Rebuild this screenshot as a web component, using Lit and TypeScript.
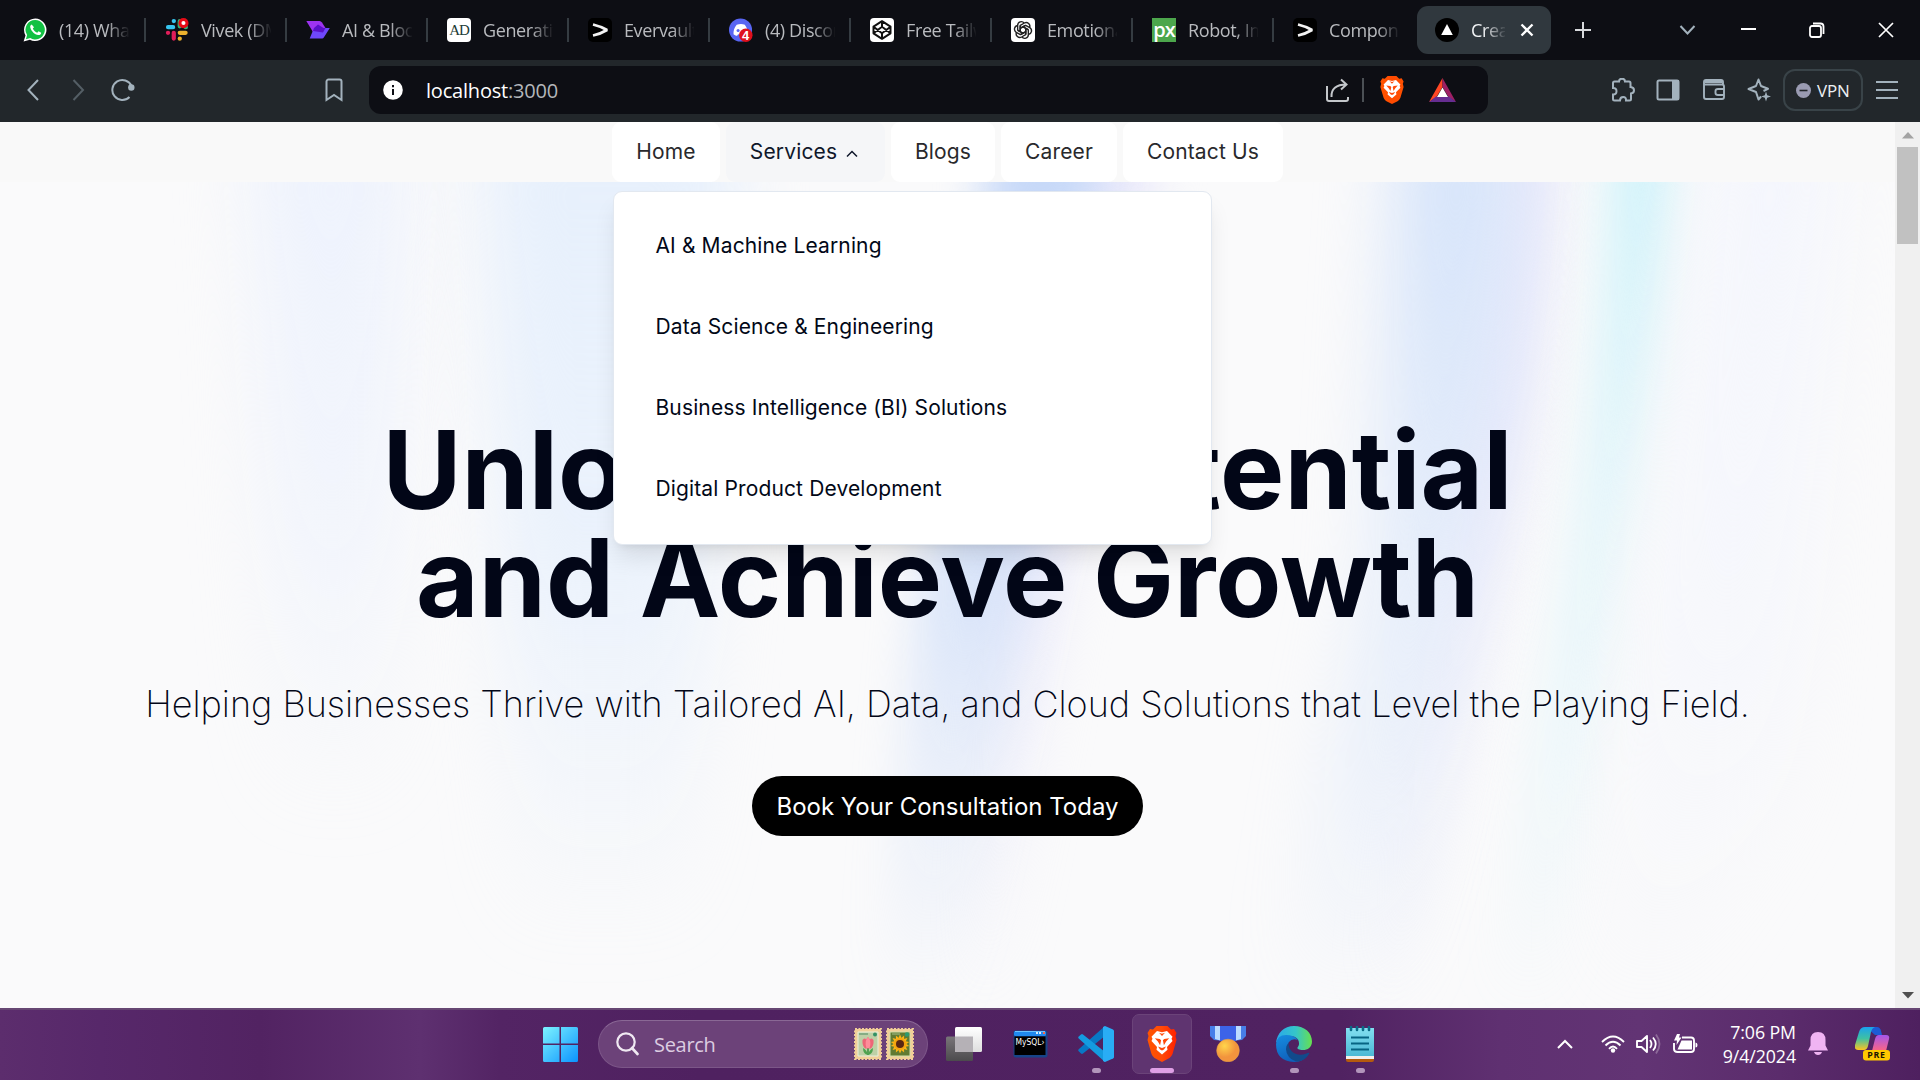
import { LitElement, html, svg, css } from "lit";
import { customElement } from "lit/decorators.js";

const stampEdge = "M1 1h26v30H1z";

const icons = {
  whatsapp: html`<svg width="24" height="24" viewBox="0 0 24 24"><path d="M12.300 .5A11.300 11.300 0 0 0 2.500 17.400L.6 23.500l6.300-1.700A11.300 11.300 0 1 0 12.300.5z" fill="#fff"/><path d="M12.300 2a9.700 9.700 0 0 0-8.200 15l-1.200 4.200 4.400-1.100A9.700 9.700 0 1 0 12.300 2z" fill="#12c143"/><path d="M8.700 6.500c-.9.300-1.800 1.500-1.400 3.100.9 3.700 4.200 7 8 7.500 1.600.1 2.800-.8 2.900-2.300l-2.600-1.600-1.400 1.500c-2-.7-3.700-2.200-4.400-4.100l1.200-1.400z" fill="#fff"/></svg>`,
  slack: html`<svg width="26" height="26" viewBox="0 0 26 26"><g stroke-width="4.600" stroke-linecap="round"><path d="M3.300 10h5.500M9.500 3.300h.1" stroke="#36c5f0"/><path d="M16 3.500V9M22.500 10h.1" stroke="#2eb67d"/><path d="M16 16h6.300M16 22.300v.1" stroke="#ecb22e"/><path d="M9.500 16v6.300M3.200 16h.1" stroke="#e01e5a"/></g><circle cx="20" cy="5.500" r="5.500" fill="#e60b16"/><circle cx="20" cy="5.500" r="2.200" fill="#fff"/></svg>`,
  arrow: html`<svg width="24" height="24" viewBox="0 0 24 24"><path d="M.3 3h13.200q1.500 0 2.500 1.500L19.500 10 17 14H7z" fill="#9d33f0"/><path d="M8 10L3.700 20.500h12.500q1 0 1.600-1L23.800 10z" fill="#6f48fb"/><path d="M8 10l4-3.500L17.500 10h2l-2.500 4.500L7 13z" fill="#5a10c8"/></svg>`,
  ad: html`<span class="fav ad">AD</span>`,
  evervault: html`<svg width="24" height="24" viewBox="0 0 24 24"><rect width="24" height="24" rx="5" fill="#000"/><path d="M5 6.500c5 1.200 9.500 2.800 14 5.500-4.500 2.700-9 4.400-14 5.500" fill="none" stroke="#f2f2f2" stroke-width="2.800" stroke-linejoin="bevel"/></svg>`,
  discord: html`<svg width="25" height="25" viewBox="0 0 25 25"><circle cx="12" cy="12" r="12" fill="#5865f2"/><path d="M8 6.500c3-1 6-1 8.500 0 2.500 3.500 3.300 6.500 3 10-2 1.500-3 1.500-3.500 1.500l-1-1.500c-2 .5-4 .5-5.500 0L8.500 18c-1.500 0-3-1-3.800-1.600C4.500 13 5.500 9.500 8 6.500z" fill="#fff"/><circle cx="9.500" cy="12.500" r="1.600" fill="#5865f2"/><circle cx="17.500" cy="17.500" r="7" fill="#e0101c"/><text x="17.400" y="22.300" text-anchor="middle" font-family="Liberation Sans" font-size="13.500" font-weight="700" fill="#fff">4</text></svg>`,
  codepen: html`<svg width="24" height="24" viewBox="0 0 24 24"><rect width="24" height="24" rx="4" fill="#fff"/><path d="M12 3.200l8.500 5.500v6.600L12 20.800l-8.500-5.500V8.700zM12 3.200v5.600M12 15.200v5.600M3.500 8.700L12 15.200l8.500-6.500M3.500 15.300L12 8.800l8.500 6.500" fill="none" stroke="#111" stroke-width="2" stroke-linejoin="round"/></svg>`,
  openai: html`<svg width="24" height="24" viewBox="0 0 24 24"><rect width="24" height="24" rx="4" fill="#fff"/><g fill="none" stroke="#222" stroke-width="1.400" stroke-linejoin="round">${[0, 60, 120, 180, 240, 300].map((a) => svg`<path transform="rotate(${a} 12 12)" d="M9.300 14V7.400l4.100-2.400a3.700 3.700 0 0 1 5.200 4.600M9.300 10.200l5.100-2.900"/>`)}</g></svg>`,
  px: html`<span class="fav px">px</span>`,
  vercel: html`<svg width="24" height="24" viewBox="0 0 24 24"><circle cx="12" cy="12" r="12" fill="#000"/><path d="M12 6l5.800 11H6.200z" fill="#fff"/></svg>`,
};

const lion = (w: number, h: number, id: string) => html`<svg width="${w}" height="${h}" viewBox="0 0 30 36" preserveAspectRatio="none"><defs><linearGradient id="${id}"><stop offset="0" stop-color="#ff5500"/><stop offset=".5" stop-color="${id === "tb" ? "#ff4a00" : "#ff4a08"}"/><stop offset="1" stop-color="${id === "tb" ? "#ff5000" : "#ff2000"}"/></linearGradient></defs><path d="M9.500 0h11l3.500 3.500 3-.5 2.500 4-1 3 1 4-4 14q-1 2.500-3 4L15 36l-7.500-4q-2-1.500-3-4l-4-14 1-4-1-3L3 3l3 .5z" fill="url(#${id})"/><path d="M15 6.300l5-1.300 5.500 5.800-1 2 1 2.200-5.500 6 .5 2.800L15 28.500l-5.500-4.700.5-2.800-5.500-6 1-2.200-1-2L10 5z" fill="#fff"/><path d="M7.800 12.200l5 .8 1.300 1.200-1 5-2.200-3.600zM22.200 12.200l-5 .8-1.300 1.200 1 5 2.200-3.600zM11 20.500l4 1.500 4-1.500-2 3-2 1-2-1zM12 6.800l3 1 3-1-3 3.300z" fill="#ff4a0a"/></svg>`;

const tabs = [
  { icon: icons.whatsapp, label: "(14) WhatsApp" },
  { icon: icons.slack, label: "Vivek (DM)" },
  { icon: icons.arrow, label: "AI & Blockchain" },
  { icon: icons.ad, label: "Generative" },
  { icon: icons.evervault, label: "Evervault C" },
  { icon: icons.discord, label: "(4) Discord" },
  { icon: icons.codepen, label: "Free Tailwind" },
  { icon: icons.openai, label: "Emotional" },
  { icon: icons.px, label: "Robot, Img" },
  { icon: icons.evervault, label: "Components" },
];

@customElement("browser-tabs")
class BrowserTabs extends LitElement {
  static styles = css`
    :host { display: flex; height: 60px; background: #0d0e14; align-items: center; font: 18px "Open Sans", sans-serif; color: #b9bbbf; overflow: hidden; }
    .tab { width: 141px; height: 24px; box-sizing: border-box; display: flex; align-items: center; padding-left: 19px; border-right: 2px solid #353c42; flex: none; margin-right: 0; }
    .tab:first-child { width: 146px; padding-left: 23px; }
    .tab.last { border-color: transparent; }
    .ico { width: 24px; height: 26px; display: flex; align-items: center; flex: none; }
    .label { margin-left: 12px; width: 70px; overflow: hidden; white-space: nowrap; line-height: 26px; letter-spacing: -0.38px; -webkit-mask-image: linear-gradient(90deg, #000 48px, transparent 71px); mask-image: linear-gradient(90deg, #000 48px, transparent 71px); }
    .fav { width: 24px; height: 24px; display: grid; place-items: center; }
    .ad { background: #fff; border-radius: 4px; color: #223c35; font: 15px "Liberation Serif", serif; letter-spacing: -1px; }
    .px { background: #4ca64c; color: #fff; font: 600 20px/20px "Open Sans", sans-serif; letter-spacing: -1px; height: 24px; }
    .active { width: 134px; height: 48px; border-radius: 11px; background: #30383e; display: flex; align-items: center; box-sizing: border-box; padding-left: 18px; color: #f2f4f6; flex: none; margin-left: 2px; }
    .active .label { width: 34px; -webkit-mask-image: linear-gradient(90deg, #000 12px, transparent 36px); mask-image: linear-gradient(90deg, #000 12px, transparent 36px); }
    .x { margin-left: 15px; }
    .controls { display: flex; align-items: center; }
    .plus { margin-left: 23px; }
    .down { margin-left: 87px; }
    .min { margin-left: 45px; }
    .restore { margin-left: 53px; }
    .close { margin-left: 53px; }
    svg { display: block; }
  `;
  render() {
    return html`
      ${tabs.map((t, i) => html`<div class="tab ${i === 9 ? "last" : ""}"><span class="ico">${t.icon}</span><span class="label">${t.label}</span></div>`)}
      <div class="active"><span class="ico">${icons.vercel}</span><span class="label">Create</span>
        <svg class="x" width="14" height="14" viewBox="0 0 14 14"><path d="M1.500 1.500l11 11M12.500 1.500l-11 11" stroke="#fff" stroke-width="2.300"/></svg></div>
      <div class="controls">
        <svg class="plus" width="18" height="18" viewBox="0 0 18 18"><path d="M9 1v16M1 9h16" stroke="#d8dadd" stroke-width="2"/></svg>
        <svg class="down" width="17" height="12" viewBox="0 0 17 12"><path d="M1.500 2l7 7.500 7-7.500" stroke="#a3b2bd" stroke-width="2" fill="none"/></svg>
        <svg class="min" width="15" height="4" viewBox="0 0 15 4"><path d="M0 1h15" stroke="#fff" stroke-width="2"/></svg>
        <svg class="restore" width="16" height="16" viewBox="0 0 16 16"><rect x="1" y="4" width="11" height="11" rx="2" fill="none" stroke="#fff" stroke-width="1.800"/><path d="M4 1.500h7.500a3 3 0 0 1 3 3V12" fill="none" stroke="#fff" stroke-width="1.800"/></svg>
        <svg class="close" width="16" height="16" viewBox="0 0 16 16"><path d="M1 1l14 14M15 1L1 15" stroke="#fff" stroke-width="1.700"/></svg>
      </div>`;
  }
}

@customElement("browser-toolbar")
class BrowserToolbar extends LitElement {
  static styles = css`
    :host { display: flex; height: 62px; background: #22272b; align-items: center; font-family: "Open Sans", sans-serif; box-sizing: border-box; padding-bottom: 2px; }
    svg { display: block; flex: none; }
    .back { margin-left: 26px; } .fwd { margin-left: 32px; } .reload { margin-left: 25px; } .bm { margin-left: 190px; }
    .url { margin-left: 25px; width: 1119px; height: 48px; border-radius: 12px; background: #0d0e14; display: flex; align-items: center; box-sizing: border-box; padding-left: 14px; color: #fff; font-size: 20px; flex: none; }
    .addr { margin-left: 23px; letter-spacing: -0.2px; width: 899px; flex: none; }
    .port { color: #b4b7bb; }
    .div { width: 2px; height: 24px; background: #4b5055; margin: 0 16px 0 12px; flex: none; }
    .bat { margin-left: 25px; }
    .tools { display: flex; align-items: center; gap: 21.300px; margin-left: 123px; }
    .vpn { margin-left: 12px; width: 80px; height: 42px; box-sizing: border-box; border: 2px solid #394348; border-radius: 12px; display: flex; align-items: center; justify-content: center; gap: 6px; font-size: 17px; color: #edf0f3; letter-spacing: -0.2px; flex: none; }
    .menu { margin-left: 13px; }
  `;
  render() {
    const c = "#a3b2bd";
    return html`
      <svg class="back" width="14" height="26" viewBox="0 0 14 26"><path d="M12 3L2.500 13 12 23" fill="none" stroke="${c}" stroke-width="2"/></svg>
      <svg class="fwd" width="14" height="26" viewBox="0 0 14 26"><path d="M1.500 3L11 13 1.500 23" fill="none" stroke="#545e65" stroke-width="2"/></svg>
      <svg class="reload" width="24" height="24" viewBox="0 0 24 24"><path d="M18.500 19A10 10 0 1 1 20.500 8" fill="none" stroke="${c}" stroke-width="2"/><circle cx="20.300" cy="9.500" r="3.200" fill="${c}"/></svg>
      <svg class="bm" width="19" height="24" viewBox="0 0 19 24"><path d="M1.500 22V3.500a2 2 0 0 1 2-2h11a2 2 0 0 1 2 2V22L9 17z" fill="none" stroke="${c}" stroke-width="2"/></svg>
      <div class="url">
        <svg width="20" height="20" viewBox="0 0 20 20"><circle cx="10" cy="10" r="9.800" fill="#fff"/><path d="M10 5v2.200M10 9v6" stroke="#0d0e14" stroke-width="2"/></svg>
        <span class="addr">localhost<span class="port">:3000</span></span>
        <svg class="share" width="25" height="25" viewBox="0 0 25 25"><path d="M2 8v13q0 2 2 2h17q2 0 2-2v-2M6.500 19C6 11 11 6.500 21.500 6.500M16 1.500l5.500 5-5.500 5" fill="none" stroke="#c4c7cb" stroke-width="2"/></svg>
        <span class="div"></span>
        ${lion(24, 28, "tb")}
        <svg class="bat" width="27" height="24" viewBox="0 0 27 24"><path d="M13.500 0L0 24l7.500-5 6-10z" fill="#ff4724"/><path d="M13.500 0L27 24l-7.500-5-6-10z" fill="#9e1f63"/><path d="M0 24h27l-7-5.500H7z" fill="#662d91"/><path d="M13.500 9.500L8 19h11z" fill="#fff"/></svg>
      </div>
      <div class="tools">
        <svg width="24" height="24" viewBox="0 0 24 24"><path d="M2 5q0-1.500 1.500-1.500h4.500q0-2.800 3-2.800t3 2.800h4q1.500 0 1.500 1.500v4q3.500.3 3.500 3.200t-3 3.300v5.500q0 1.500-1.500 1.500h-3.500q.3-3.500-2.800-3.500T9 22.500H3.500Q2 22.500 2 21v-4.500q3.500.2 3.500-3.200T2 10z" fill="none" stroke="${c}" stroke-width="2"/></svg>
        <svg width="24" height="24" viewBox="0 0 24 24"><rect x="1.500" y="2.500" width="21" height="19" rx="1.500" fill="none" stroke="${c}" stroke-width="2"/><path d="M16 2h7v20h-7z" fill="${c}"/></svg>
        <svg width="24" height="24" viewBox="0 0 24 24"><path d="M21 7V4q0-2-2-2H4Q2 2 2 4v15q0 2 2 2h16q2 0 2-2v-2M2 6.500h18q2 0 2 2V17h-6q-2.500 0-2.500-2v-2q0-2 2.500-2h6M3 4h17" fill="none" stroke="${c}" stroke-width="1.900"/></svg>
        <svg width="24" height="24" viewBox="0 0 24 24"><path d="M14 18.500l-2.500 3-2.500-7.500-7.500-3 7.500-3 2.500-6.500L14 8l7 2.800-4.500 2.200" fill="none" stroke="${c}" stroke-width="2" stroke-linejoin="round"/><path d="M19 13.500l1.200 3.800 3.800 1.200-3.800 1.200L19 23.500l-1.200-3.800-3.800-1.200 3.800-1.200z" fill="${c}"/></svg>
      </div>
      <div class="vpn"><svg width="15" height="15" viewBox="0 0 15 15"><circle cx="7.500" cy="7.500" r="7.500" fill="#9a9bb2"/><path d="M3.500 7.500h8" stroke="#22272b" stroke-width="1.600"/></svg>VPN</div>
      <svg class="menu" width="22" height="20" viewBox="0 0 22 20"><path d="M0 2h22M0 10h22M0 18h22" stroke="${c}" stroke-width="2"/></svg>`;
  }
}

@customElement("site-page")
class SitePage extends LitElement {
  static styles = css`
    :host { display: flex; height: 886px; font-family: Inter, sans-serif; background: #fafafb; position: relative; overflow: hidden; }
    .page { width: 1895px; position: relative; }
    .nav { height: 60px; background: #f9f9f9; display: flex; gap: 6px; padding-left: 612px; position: relative; color: #29292c; font-size: 21px; }
    .item { height: 60px; border-radius: 9px; background: #fff; display: flex; align-items: center; justify-content: center; letter-spacing: .15px; box-sizing: border-box; padding-bottom: 1.500px; }
    .item.home { width: 108px; } .item.services { width: 159px; background: #f5f6f8; color: #0f172a; gap: 9px; padding-right: 3px; }
    .item.blogs { width: 104px; } .item.career { width: 116px; } .item.contact { width: 160px; }
    .item.services svg { margin-top: 5px; }
    .drop { position: absolute; left: 612.500px; top: 69px; width: 599px; height: 354px; box-sizing: border-box; border: 1.500px solid #e2e8f0; border-radius: 9px; background: #fff; box-shadow: 0 15px 23px -4px rgba(0,0,0,.1), 0 6px 9px -6px rgba(0,0,0,.1); padding: 12.500px 42px; color: #020817; font-size: 21px; z-index: 2; letter-spacing: .13px; }
    .drop div { height: 81px; display: flex; align-items: center; }
    .drop span { white-space: nowrap; }
    .hero { height: 826px; position: relative; box-sizing: border-box; padding-top: 234px; display: flex; flex-direction: column; align-items: center; }
    .beams { position: absolute; left: 0; top: 0; }
    h1 { margin: 0; font-size: 108px; line-height: 108px; font-weight: 700; color: #020617; text-align: center; position: relative; white-space: nowrap; }
    p { margin: 42px 0 0; font-size: 36px; line-height: 60px; font-weight: 200; color: #020617; position: relative; white-space: nowrap; }
    .cta { margin-top: 42px; width: 391px; height: 60px; border-radius: 30px; background: #000; color: #fff; font-size: 24px; display: grid; place-items: center; position: relative; }
    .bar { width: 25px; background: #f0f0f0; display: flex; flex-direction: column; align-items: center; box-sizing: border-box; padding: 10px 0 9px; }
    .thumb { width: 21px; height: 97px; background: #c1c1c1; margin-top: 8px; margin-bottom: auto; }
  `;
  render() {
    const beam = (id: string, color: string, stops: number[][]) => svg`<linearGradient id="${id}" x1="0" y1="0" x2="0" y2="826" gradientUnits="userSpaceOnUse">${stops.map(([o, a]) => svg`<stop offset="${o}" stop-color="${color}" stop-opacity="${a}"/>`)}</linearGradient>`;
    return html`
      <div class="page">
        <nav class="nav">
          <div class="item home">Home</div>
          <div class="item services">Services<svg width="12" height="9" viewBox="0 0 12 9"><path d="M1 7.500l5-5 5 5" fill="none" stroke="#0f172a" stroke-width="1.500"/></svg></div>
          <div class="item blogs">Blogs</div>
          <div class="item career">Career</div>
          <div class="item contact">Contact Us</div>
          <div class="drop">
            <div><span>AI &amp; Machine Learning</span></div>
            <div><span>Data Science &amp; Engineering</span></div>
            <div><span>Business Intelligence (BI) Solutions</span></div>
            <div><span>Digital Product Development</span></div>
          </div>
        </nav>
        <section class="hero">
          <svg class="beams" width="1895" height="826" viewBox="0 0 1895 826">
            <defs>
              <filter id="b1" x="-50%" y="-20%" width="200%" height="140%" color-interpolation-filters="sRGB"><feGaussianBlur stdDeviation="22 30"/></filter>
              <filter id="b2" x="-50%" y="-20%" width="200%" height="140%" color-interpolation-filters="sRGB"><feGaussianBlur stdDeviation="34 40"/></filter>
              ${beam("g1", "#edf2fd", [[0, 0.9], [0.4, 0.6], [0.75, 0]])}
              ${beam("g2", "#e7f0fc", [[0, 1], [0.45, 0.8], [0.9, 0]])}
              ${beam("g3", "#c6d8f8", [[0, 1], [0.1, 0.85], [0.5, 0.6], [0.72, 0.3], [1, 0]])}
              ${beam("g4", "#d6e4fa", [[0, 1], [0.4, 0.65], [0.7, 0.4], [1, 0]])}
              ${beam("g7", "#e9e8fb", [[0, 0.9], [0.4, 0.7], [0.7, 0.3], [1, 0]])}
              ${beam("g5", "#d3f3fa", [[0, 1], [0.4, 0.5], [0.7, 0.28], [1, 0]])}
              ${beam("g6", "#f4f6fd", [[0, 0.9], [0.5, 0.6], [1, 0]])}
            </defs>
            <path d="M250-80H410L390 700H280z" fill="url(#g1)" filter="url(#b2)"/>
            <path d="M480-80H740L680 826H520z" fill="url(#g2)" filter="url(#b2)"/>
            <path d="M1080-80H1170L1070 400L1000 860H950L1000 400z" fill="url(#g7)" filter="url(#b1)"/>
            <path d="M990-80H1105Q1080 200 1030 400L950 860H870L920 400Q980 150 990-80z" fill="url(#g3)" filter="url(#b1)"/>
            <path d="M1500-80H1560Q1550 200 1500 400L1400 860H1350L1450 400z" fill="url(#g7)" filter="url(#b1)"/>
            <path d="M1400-80H1520Q1520 200 1470 400L1390 860H1270L1370 400z" fill="url(#g4)" filter="url(#b2)"/>
            <path d="M1610-80H1680Q1670 150 1620 400L1550 860H1480L1560 400Q1605 150 1610-80z" fill="url(#g5)" filter="url(#b1)"/>
            <path d="M1720-80H1840L1790 600L1650 860H1580z" fill="url(#g6)" filter="url(#b2)"/>
          </svg>
          <h1>Unlock Your Potential<br>and Achieve Growth</h1>
          <p>Helping Businesses Thrive with Tailored AI, Data, and Cloud Solutions that Level the Playing Field.</p>
          <div class="cta">Book Your Consultation Today</div>
        </section>
      </div>
      <div class="bar">
        <svg width="12" height="7" viewBox="0 0 12 7"><path d="M6 0l6 6.500H0z" fill="#a3a3a3"/></svg>
        <div class="thumb"></div>
        <svg width="12" height="7" viewBox="0 0 12 7"><path d="M6 6.500L12 0H0z" fill="#505050"/></svg>
      </div>`;
  }
}

@customElement("task-bar")
class TaskBar extends LitElement {
  static styles = css`
    :host { display: flex; height: 72px; box-sizing: border-box; border-top: 2px solid #664673; padding-bottom: 2px; background: linear-gradient(90deg, #5c2d6d 0, #57286a 100px, #522362 260px, #5e3070 420px, #532464 500px, #4f2160 700px, #502261 1340px, #5f3071 1500px, #623474 1640px, #5b2c6c 1780px, #4e205f 1920px); align-items: center; font-family: "Open Sans", sans-serif; color: #fff; }
    svg { display: block; flex: none; }
    .win { margin-left: 543px; }
    .search { margin-left: 20px; width: 330px; height: 48px; border-radius: 24px; background: #6c4279; box-sizing: border-box; border: 1.500px solid #7c5688; border-top-color: #8a6895; display: flex; align-items: center; padding-left: 17px; font-size: 20px; color: #dccde1; }
    .search span { margin-left: 15px; width: 200px; letter-spacing: -.3px; }
    .stamp { margin-right: 4px; }
    .app { display: flex; flex-direction: column; align-items: center; width: 60px; height: 60px; box-sizing: border-box; border-radius: 7px; margin-left: 6px; flex: none; }
    .app .pic { height: 36px; margin-top: 12px; display: grid; place-items: center; }
    .app.sel { background: #5f3470; border: 1.500px solid #6b4379; }
    .app.sel .pic { margin-top: 10.500px; }
    .dot { width: 9px; height: 5px; border-radius: 3px; background: #b295bb; margin-top: 6px; }
    .dot.on { width: 24px; background: #df9fe6; }
    .tview { margin-left: 18px; } .mysql { margin-left: 31px; }
    .apps { display: flex; margin-left: 12px; }
    .tray { display: flex; align-items: center; margin-left: 167px; }
    .wifi { margin-left: 28px; } .vol { margin-left: 11px; } .batt { margin-left: 12px; }
    .clock { width: 90px; margin-left: 8px; text-align: right; font-size: 17.800px; line-height: 24px; letter-spacing: -.1px; white-space: nowrap; }
    .bell { margin-left: 12px; } .cop { margin-left: 27px; }
  `;
  render() {
    return html`
      <svg class="win" width="35" height="35" viewBox="0 0 35 35"><defs><linearGradient id="w" x1="0" y1="0" x2="1" y2="1"><stop offset="0" stop-color="#7df3ff"/><stop offset="1" stop-color="#0b93ff"/></linearGradient></defs><path d="M1.500 0H16.500V16.500H0V1.500Q0 0 1.500 0zM18 0h15.500Q35 0 35 1.500v15H18zM0 18h16.500v17h-15Q0 35 0 33.500zM18 18h17v15.500q0 1.500-1.500 1.500H18z" fill="url(#w)"/></svg>
      <div class="search">
        <svg width="23" height="24" viewBox="0 0 23 24"><circle cx="10" cy="10" r="8.700" fill="none" stroke="#f0e9f2" stroke-width="2.200"/><path d="M16 16l5.500 6" stroke="#f0e9f2" stroke-width="2.600" stroke-linecap="round"/></svg>
        <span>Search</span>
        <svg class="stamp" width="28" height="32" viewBox="0 0 28 32"><path d="${stampEdge}" fill="#f1cf98" stroke="#f1cf98" stroke-width="2" stroke-dasharray="2 1.500"/><path d="M4 4h20v24H4z" fill="#bed0a6" stroke="#e9f0dc"/><path d="M14 17v10" stroke="#3d9343" stroke-width="1.600"/><path d="M14 27q-5-1-5-7 4 2 5 7q1-5 5-7 0 6-5 7z" fill="#4da34e"/><path d="M8.500 12q2.500-2.500 3.500-.5l2-2.500 2 2.500q1-2 3.500.5.5 5.500-2.500 8.500h-6q-3-3-2.500-8.500z" fill="#ee6678"/><path d="M14 9q4 5 1.500 11h-3Q10 14 14 9z" fill="#ff8d9a"/><path d="M5 6h9" stroke="#4f8a63"/><circle cx="21" cy="6.500" r="2" fill="#349164"/></svg>
        <svg class="stamp" width="28" height="32" viewBox="0 0 28 32"><path d="${stampEdge}" fill="#f1cf98" stroke="#f1cf98" stroke-width="2" stroke-dasharray="2 1.500"/><path d="M4 4h20v24H4z" fill="#617a32" stroke="#d2dfac"/><circle cx="21" cy="6.500" r="2.200" fill="#2d9a70"/><g fill="#fcb416">${Array.from({ length: 14 }, (_, i) => svg`<path transform="rotate(${(i * 360) / 14} 14 16)" d="M12 11l2-4.500 2 4.500z"/>`)}</g><circle cx="14" cy="16" r="6" fill="#f6a40f"/><circle cx="14" cy="16" r="4" fill="#5a2613"/><path d="M6 6h8" stroke="#a7bf8a"/></svg>
      </div>
      <svg class="tview" width="36" height="34" viewBox="0 0 36 34"><defs><linearGradient id="t1" x2="0" y2="1"><stop offset="0" stop-color="#fff"/><stop offset="1" stop-color="#dedede"/></linearGradient><linearGradient id="t2" x2="0" y2="1"><stop offset="0" stop-color="#797579"/><stop offset="1" stop-color="#4c4b4d"/></linearGradient></defs><rect x="0" y="9.500" width="27" height="24.500" rx="1.500" fill="url(#t2)"/><rect x="9" y="0" width="27" height="25" rx="1.500" fill="url(#t1)"/><path d="M9 9.500h18V25H9z" fill="#b5b1b6"/></svg>
      <svg class="mysql" width="35" height="28" viewBox="0 0 35 28"><rect x=".5" y=".5" width="34" height="27" rx="2" fill="#174488"/><rect x="1" y="1" width="32" height="5" rx="1.500" fill="#2089ef"/><path d="M2 1.500h30" stroke="#6bc3ff"/><path d="M23 3h6" stroke="#d8efff" stroke-width="2" stroke-dasharray="2 1"/><path d="M30 3h2" stroke="#f66b4a" stroke-width="2"/><path d="M1.500 6.500h31V25h-31z" fill="#000"/><text x="2.500" y="14.800" font-family="DejaVu Sans" font-size="8.200" textLength="29" lengthAdjust="spacingAndGlyphs" fill="#fff">MySQL›</text></svg>
      <div class="apps">
        <div class="app"><div class="pic"><svg width="36" height="36" viewBox="0 0 36 36"><path d="M27 0v10L5 27.500q-1 .8-2 0L.7 25.300q-1-1 0-2z" fill="#0878c5"/><path d="M.7 12.500q-1-1 0-2L3 8.500q1-.8 2 0L27 26v10z" fill="#149be0"/><path d="M27 0l8 3.500q1 .5 1 1.500v26q0 1-1 1.500L27 36l-2-1V1z" fill="#29adf5"/></svg></div><span class="dot"></span></div>
        <div class="app sel"><div class="pic">${lion(30, 36, "tk")}</div><span class="dot on"></span></div>
        <div class="app"><div class="pic"><svg width="36" height="36" viewBox="0 0 36 36"><defs><radialGradient id="md" cx=".35" cy=".3"><stop offset="0" stop-color="#ffd54b"/><stop offset="1" stop-color="#f2943d"/></radialGradient></defs><path d="M0 0h36v10l-4 4-6 .5-3 2H13l-3-2-6-.5-4-4z" fill="#477ee8"/><path d="M5 0h5v14.500L5 13zM26 0h5v13l-5 1.500z" fill="#bcdcff"/><path d="M10 0h16v15H10z" fill="#3c63e8"/><circle cx="18" cy="24.500" r="11.300" fill="url(#md)" stroke="#e9a145" stroke-width=".6"/></svg></div></div>
        <div class="app"><div class="pic"><svg width="36" height="36" viewBox="0 0 36 36"><defs><linearGradient id="e1"><stop offset="0" stop-color="#2aa8ea"/><stop offset=".55" stop-color="#35c5c9"/><stop offset="1" stop-color="#67e04f"/></linearGradient><linearGradient id="e2" x2=".4" y2="1"><stop offset="0" stop-color="#168de0"/><stop offset="1" stop-color="#0f5fba"/></linearGradient></defs><path d="M0 17C1 7 8 0 18 0c11 0 18 7 18 15.500 0 6-4.500 8.500-9 8.500-4 0-6-1-5.500-2.500 2-2 2-5 .5-8C18 8 5 9 0 17z" fill="url(#e1)"/><path d="M0 18Q1 9 10 9q8 0 12 5-6-2-9 2-5 7 2 14 7 5 18-3-5 9-15 9Q0 35 0 18z" fill="url(#e2)"/><path d="M13 16q-6 7 0 15 7 7 14 3 4-2 6.500-7-1-.5-3 .5-9 3.500-15-2.500-4-4-2.500-9z" fill="#114a8b"/></svg></div><span class="dot"></span></div>
        <div class="app"><div class="pic"><svg width="28" height="36" viewBox="0 0 28 36"><defs><linearGradient id="n" x2="0" y2="1"><stop offset="0" stop-color="#83dff0"/><stop offset="1" stop-color="#4cb9d6"/></linearGradient></defs><path d="M0 32h28v2q0 2-2 2H2q-2 0-2-2z" fill="#b45a0e"/><path d="M0 29h28v4H0z" fill="#f2f0ee"/><path d="M0 2h28v28H0z" fill="url(#n)"/><path d="M5 11.500h18M5 17.500h18M5 23.500h18" stroke="#076483" stroke-width="2"/><path d="M5 1v3M11 1v3M17 1v3M23 1v3" stroke="#0a6a87" stroke-width="2.600" stroke-linecap="round"/></svg></div><span class="dot"></span></div>
      </div>
      <div class="tray">
        <svg width="16" height="10" viewBox="0 0 16 10"><path d="M1 9l7-7 7 7" fill="none" stroke="#fff" stroke-width="2"/></svg>
        <svg class="wifi" width="24" height="18" viewBox="0 0 24 18"><g fill="none" stroke="#fff" stroke-width="1.900"><path d="M1 7Q12-4 23 7M4.500 10.500q7.500-7.500 15 0M8 13.800q4-4.500 8 0"/></g><circle cx="12" cy="15.500" r="2.200" fill="#fff"/></svg>
        <svg class="vol" width="25" height="20" viewBox="0 0 25 20"><path d="M1 7h4.500L11 2v16l-5.500-5H1z" fill="none" stroke="#fff" stroke-width="1.900" stroke-linejoin="round"/><path d="M14 6q3 4 0 8M17 3.500q5.500 6.500 0 13" fill="none" stroke="#fff" stroke-width="1.800"/><path d="M20 .5q7 9.500 0 19" fill="none" stroke="#8d6a99" stroke-width="1.800"/></svg>
        <svg class="batt" width="25" height="20" viewBox="0 0 25 20"><path d="M9 3.500h9q3 0 3 3V15q0 3-3 3H4.500Q1 18 1 15V9" fill="none" stroke="#fff" stroke-width="1.900"/><path d="M8.500 6.500H19v9H4.500z" fill="#fff"/><path d="M22.500 8.500q2 0 2 2.500t-2 2.500zM4 0h3L6 3.500h2.500L3.500 11 4 6.500H1z" fill="#fff"/></svg>
        <div class="clock">7:06 PM<br>9/4/2024</div>
        <svg class="bell" width="20" height="24" viewBox="0 0 20 24"><path d="M10 0q7.500 0 7.500 8v5.500L20 18.500H0l2.500-5V8Q2.500 0 10 0zM6 20h8q-1 3-4 3t-4-3z" fill="#f0b4f3"/></svg>
        <svg class="cop" width="36" height="36" viewBox="0 0 36 36"><defs><linearGradient id="c1" x2="0" y2="1"><stop offset="0" stop-color="#1aa2ee"/><stop offset=".5" stop-color="#3fc1a2"/><stop offset="1" stop-color="#ffc420"/></linearGradient><linearGradient id="c2" x2="0" y2="1"><stop offset="0" stop-color="#a356ec"/><stop offset="1" stop-color="#ff6681"/></linearGradient></defs><path d="M11 1h11q3 0 4 4l1 4h-7z" fill="#1c5bd5"/><path d="M24 9h7q4 0 3 4l-3 12H17l3-12q1-4 4-4z" fill="url(#c2)"/><path d="M10 1h10q-3 1-4 5l-3 14q-1 4-4 4H3q-4 0-3-5L4 6q1.500-5 6-5z" fill="url(#c1)"/><rect x="8" y="24" width="27" height="10.500" rx="3" fill="#ffc800"/><text x="21.500" y="32.300" text-anchor="middle" font-family="Open Sans" font-size="8.800" font-weight="700" letter-spacing=".8" fill="#1c1400">PRE</text></svg>
      </div>`;
  }
}

@customElement("app-root")
class AppRoot extends LitElement {
  static styles = css`
    :host { display: flex; flex-direction: column; width: 1920px; height: 1080px; overflow: hidden; }
  `;
  render() {
    return html`<browser-tabs></browser-tabs><browser-toolbar></browser-toolbar><site-page></site-page><task-bar></task-bar>`;
  }
}
